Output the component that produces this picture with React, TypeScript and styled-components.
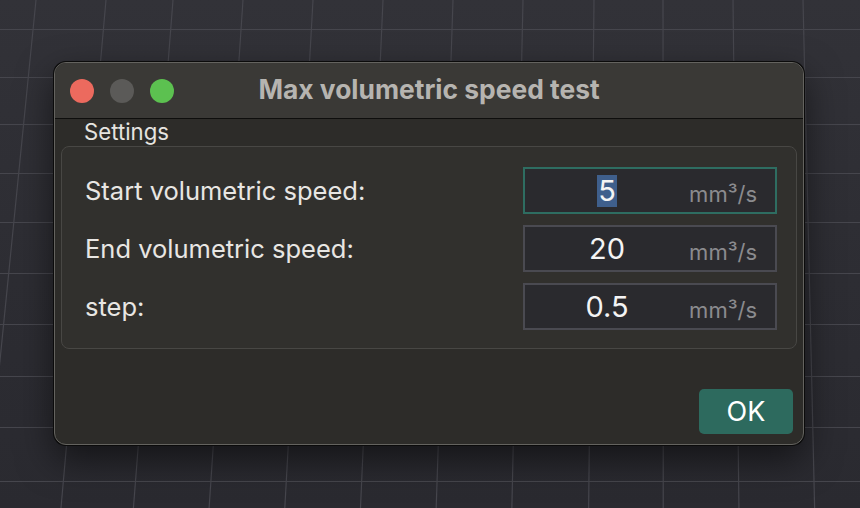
import React from "react";
import styled, { createGlobalStyle } from "styled-components";

const GlobalStyle = createGlobalStyle`
  html, body { margin: 0; padding: 0; background: #2e2e34; }
  body {
    font-family: Inter, "Noto Sans", sans-serif;
    -webkit-font-smoothing: antialiased;
  }
`;

const Page = styled.div`
  position: relative;
  width: 860px;
  height: 508px;
  overflow: hidden;
  box-sizing: border-box;
  padding: 62px 0 0 54px;
  background: linear-gradient(180deg, #323238 0%, #2d2d33 55%, #2a2a30 100%);
`;

const Backdrop = styled.svg`
  position: absolute;
  inset: 0;
  width: 100%;
  height: 100%;
`;

const Window = styled.div`
  position: relative;
  width: 750px;
  height: 383px;
  box-sizing: border-box;
  border: 1px solid #64635f;
  border-radius: 12px;
  box-shadow: 0 0 0 1px #0b0b0b, 0 14px 36px rgba(0, 0, 0, 0.55);
  background: #2d2c29;
  display: flex;
  flex-direction: column;
  overflow: hidden;
`;

const TitleBar = styled.div`
  height: 56px;
  box-sizing: border-box;
  border-bottom: 1px solid #0e0e0d;
  background: #3a3936;
  display: grid;
  grid-template-columns: 1fr auto 1fr;
  align-items: center;
  padding: 0 15px;
`;

const Lights = styled.div`
  display: flex;
  gap: 16px;
`;

const Light = styled.span<{ $color: string }>`
  width: 24px;
  height: 24px;
  border-radius: 50%;
  background: ${(p) => p.$color};
`;

const Title = styled.div`
  font-size: 26.4px;
  font-weight: 700;
  color: #b6b4b0;
  margin-top: -3px;
`;

const Body = styled.div`
  flex: 1;
  display: flex;
  flex-direction: column;
`;

const SectionLabel = styled.div`
  height: 27px;
  line-height: 27px;
  font-size: 22.2px;
  color: #e6e4e0;
  padding-left: 29px;
  margin-top: -1px;
`;

const GroupBox = styled.div`
  margin: 1px 6px 0;
  border: 1px solid #484744;
  border-radius: 8px;
  background: #31302d;
  padding: 20px 19px 18px 23px;
  display: grid;
  grid-template-columns: 1fr 254px;
  grid-auto-rows: 47px;
  row-gap: 11px;
  align-items: center;
`;

const FieldLabel = styled.div`
  font-size: 25.5px;
  color: #e8e6e3;
`;

const InputBox = styled.div<{ $focused?: boolean }>`
  height: 47px;
  box-sizing: border-box;
  border: 2px solid ${(p) => (p.$focused ? "#2e6d61" : "#4a4a51")};
  background: #2a2a2e;
  display: flex;
  align-items: center;
`;

const Value = styled.div`
  width: 168px;
  text-align: center;
  font-size: 29px;
  color: #f4f4f4;
`;

const Selected = styled.span`
  background: #3f5f8c;
  display: inline-block;
  line-height: 32px;
  padding: 0 1px;
`;

const Unit = styled.div`
  margin-left: auto;
  padding: 6px 18px 0 0;
  font-size: 22px;
  color: #8b8b8e;
`;

const Footer = styled.div`
  margin-top: auto;
  display: flex;
  justify-content: flex-end;
  padding: 0 10px 10px;
`;

const OkButton = styled.button`
  width: 94px;
  height: 45px;
  border: none;
  border-radius: 5px;
  background: #2d6a5e;
  color: #ffffff;
  font-family: inherit;
  font-size: 27px;
  padding: 0;
`;

const hLines = [29, 77, 124, 173, 222, 273, 324, 376, 427, 481];
const vTops = [36, 106, 173, 243, 313, 383, 453, 523, 594, 663, 733, 803];

function GridBackdrop() {
  const k = 1.6e-4;
  return (
    <Backdrop viewBox="0 0 860 508" preserveAspectRatio="none">
      {hLines.map((y) => (
        <line key={"h" + y} x1={0} y1={y + 0.5} x2={860} y2={y + 0.5} stroke="#46464d" strokeWidth={1.2} />
      ))}
      {vTops.map((x) => {
        const xb = x + (x - 660) * 508 * k;
        return <line key={"v" + x} x1={x} y1={0} x2={xb} y2={508} stroke="#46464d" strokeWidth={1.2} />;
      })}
    </Backdrop>
  );
}

const fields = [
  { label: "Start volumetric speed:", value: "5", focused: true },
  { label: "End volumetric speed:", value: "20" },
  { label: "step:", value: "0.5" },
];

export default function App() {
  return (
    <>
      <GlobalStyle />
      <Page>
        <GridBackdrop />
        <Window>
          <TitleBar>
            <Lights>
              <Light $color="#ec6a5e" />
              <Light $color="#5b5a58" />
              <Light $color="#5cc150" />
            </Lights>
            <Title>Max volumetric speed test</Title>
            <span />
          </TitleBar>
          <Body>
            <SectionLabel>Settings</SectionLabel>
            <GroupBox>
              {fields.map((f) => (
                <React.Fragment key={f.label}>
                  <FieldLabel>{f.label}</FieldLabel>
                  <InputBox $focused={f.focused}>
                    <Value>{f.focused ? <Selected>{f.value}</Selected> : f.value}</Value>
                    <Unit>mm³/s</Unit>
                  </InputBox>
                </React.Fragment>
              ))}
            </GroupBox>
            <Footer>
              <OkButton>OK</OkButton>
            </Footer>
          </Body>
        </Window>
      </Page>
    </>
  );
}
